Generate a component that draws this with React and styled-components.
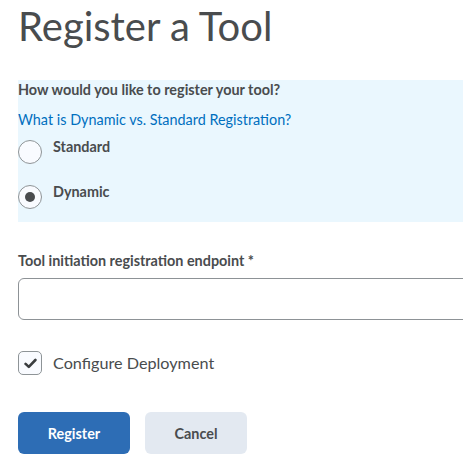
import React from "react";
import styled, { createGlobalStyle } from "styled-components";

const Global = createGlobalStyle`
  html, body { margin: 0; padding: 0; background: #fff; }
  body { font-family: Lato, "Noto Sans", sans-serif; color: #494c4e; }
  * { box-sizing: border-box; }
`;

const Page = styled.div`
  width: 100%;
  overflow: hidden;
  padding: 2px 0 0 18px;
  display: flex;
  flex-direction: column;
`;

const Title = styled.h1`
  margin: 0;
  font-size: 40px;
  font-weight: 400;
  line-height: 48px;
  color: #494c4e;
`;

const Panel = styled.div`
  margin-top: 30px;
  width: calc(100% + 24px);
  height: 142px;
  background: #eaf7fe;
  display: flex;
  flex-direction: column;
`;

const Question = styled.div`
  font-size: 14.4px;
  font-weight: 700;
  line-height: 20px;
  color: #494c4e;
`;

const HelpLink = styled.a`
  margin-top: 10px;
  align-self: flex-start;
  font-size: 14.4px;
  line-height: 20px;
  color: #006fbf;
  text-decoration: none;
`;

const RadioRow = styled.label`
  display: flex;
  align-items: flex-start;
  gap: 11px;
  margin-top: ${(p) => p.$top}px;
  font-size: 14.4px;
  font-weight: 700;
  line-height: 20px;
  color: #494c4e;
`;

const RadioCircle = styled.span`
  flex: none;
  width: 24px;
  height: 24px;
  margin-top: 3px;
  border-radius: 50%;
  border: 1.5px solid #8e9497;
  background: #f9fbff;
  display: flex;
  align-items: center;
  justify-content: center;
  &::after {
    content: "";
    width: 10px;
    height: 10px;
    border-radius: 50%;
    background: #494c4e;
    display: ${(p) => (p.$checked ? "block" : "none")};
  }
`;

const FieldLabel = styled.label`
  margin-top: 29px;
  font-size: 14.4px;
  font-weight: 700;
  line-height: 20px;
  color: #494c4e;
`;

const TextInput = styled.input`
  margin-top: 7px;
  height: 42px;
  width: calc(100% + 24px);
  border: 1px solid #8d9296;
  border-radius: 6px;
  background: #fff;
  font-family: inherit;
  font-size: 16px;
  padding: 0 12px;
  outline: none;
`;

const CheckRow = styled.label`
  margin-top: 31px;
  display: flex;
  align-items: center;
  gap: 11px;
  font-size: 16.2px;
  font-weight: 400;
  line-height: 24px;
  color: #494c4e;
`;

const CheckBox = styled.span`
  flex: none;
  width: 24px;
  height: 24px;
  border: 1.5px solid #8e9497;
  border-radius: 5px;
  background: #f9fbff;
  display: flex;
  align-items: center;
  justify-content: center;
`;

const Buttons = styled.div`
  margin-top: 37px;
  display: flex;
  gap: 15px;
`;

const Button = styled.button`
  height: 42px;
  width: ${(p) => p.$w}px;
  border: none;
  border-radius: 6px;
  font-family: inherit;
  font-size: 14.4px;
  font-weight: 700;
  background: ${(p) => (p.$primary ? "#2d6db5" : "#e3e9f1")};
  color: ${(p) => (p.$primary ? "#ffffff" : "#494c4e")};
  cursor: pointer;
`;

export default function App() {
  return (
    <>
      <Global />
      <Page>
        <Title>Register a Tool</Title>
        <Panel>
          <Question>How would you like to register your tool?</Question>
          <HelpLink href="#">What is Dynamic vs. Standard Registration?</HelpLink>
          <RadioRow $top={7}>
            <RadioCircle />
            Standard
          </RadioRow>
          <RadioRow $top={18}>
            <RadioCircle $checked />
            Dynamic
          </RadioRow>
        </Panel>
        <FieldLabel>Tool initiation registration endpoint *</FieldLabel>
        <TextInput type="text" />
        <CheckRow>
          <CheckBox>
            <svg width="13" height="11" viewBox="0 0 13 11" fill="none">
              <path d="M1.6 5.9 L4.8 8.9 L11.4 2" stroke="#3a3d3f" strokeWidth="2.6" strokeLinecap="round" strokeLinejoin="round" />
            </svg>
          </CheckBox>
          Configure Deployment
        </CheckRow>
        <Buttons>
          <Button $primary $w={112}>Register</Button>
          <Button $w={102}>Cancel</Button>
        </Buttons>
      </Page>
    </>
  );
}
